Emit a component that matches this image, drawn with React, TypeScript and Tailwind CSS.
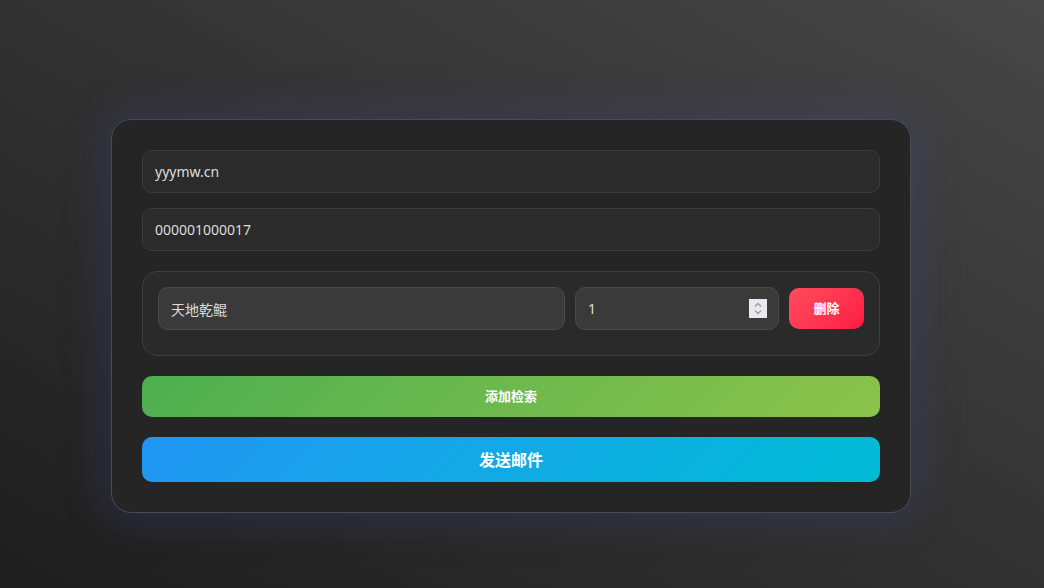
import React from "react";

const font = { fontFamily: '"Noto Sans", "Noto Sans CJK SC", sans-serif' };

export default function App() {
  return (
    <div
      className="min-h-[588px] w-full bg-linear-to-tr from-[#1e1e1e] to-[#474747] pl-[111px] pt-[119px] pb-[75px]"
      style={font}
    >
      <div className="w-[800px] rounded-[20px] border border-[#4a4a55] bg-[#252525] p-[30px] shadow-[0_0_40px_8px_rgba(70,70,150,0.28)]">
        <div className="flex flex-col gap-[15px]">
          <input
            defaultValue="yyymw.cn"
            className="h-[43px] w-full rounded-[10px] border border-[#3c3c3c] bg-[#2b2b2b] px-3 text-[14px] text-[#dddddd] outline-none"
          />
          <input
            defaultValue="000001000017"
            className="h-[43px] w-full rounded-[10px] border border-[#3c3c3c] bg-[#2b2b2b] px-3 text-[14px] text-[#dddddd] outline-none"
          />
        </div>

        <div className="mt-[20px] rounded-[15px] border border-[#3e3e3e] bg-[#2a2a2a] px-[15px] pt-[15px] pb-[25px]">
          <div className="flex items-center gap-[10px]">
            <input
              defaultValue="天地乾鲲"
              className="h-[43px] min-w-0 flex-1 rounded-[10px] border border-[#4a4a4a] bg-[#3a3a3a] px-3 text-[14px] text-[#dddddd] outline-none"
            />
            <div className="relative w-[204px]">
              <input
                type="number"
                defaultValue={1}
                className="h-[43px] w-full rounded-[10px] border border-[#4a4a4a] bg-[#3a3a3a] px-3 text-[14px] text-[#dddddd] outline-none [appearance:textfield] [&::-webkit-inner-spin-button]:appearance-none"
              />
              {/* spinner as shown in the screenshot */}
              <div className="pointer-events-none absolute right-[12px] top-[12px] flex h-[19px] w-[18px] items-center justify-center bg-[#e8e8ee]">
                <svg width="10" height="15" viewBox="0 0 10 15" fill="none" stroke="#9a9aa0" strokeWidth="1.3">
                  <path d="M2 5.5 L5 2.5 L8 5.5" />
                  <path d="M2 9.5 L5 12.5 L8 9.5" />
                </svg>
              </div>
            </div>
            <button className="h-[41px] w-[75px] rounded-[10px] bg-linear-135 from-[#ff4b5c] to-[#ff1744] text-[13px] font-bold text-white">
              删除
            </button>
          </div>
        </div>

        <button className="mt-[20px] block h-[41px] w-full rounded-[10px] bg-linear-135 from-[#4caf50] to-[#8bc34a] text-[13px] font-bold text-white">
          添加检索
        </button>
        <button className="mt-[20px] block h-[45px] w-full rounded-[10px] bg-linear-135 from-[#2196f3] to-[#00bcd4] text-[16px] font-bold text-white">
          发送邮件
        </button>
      </div>
    </div>
  );
}
